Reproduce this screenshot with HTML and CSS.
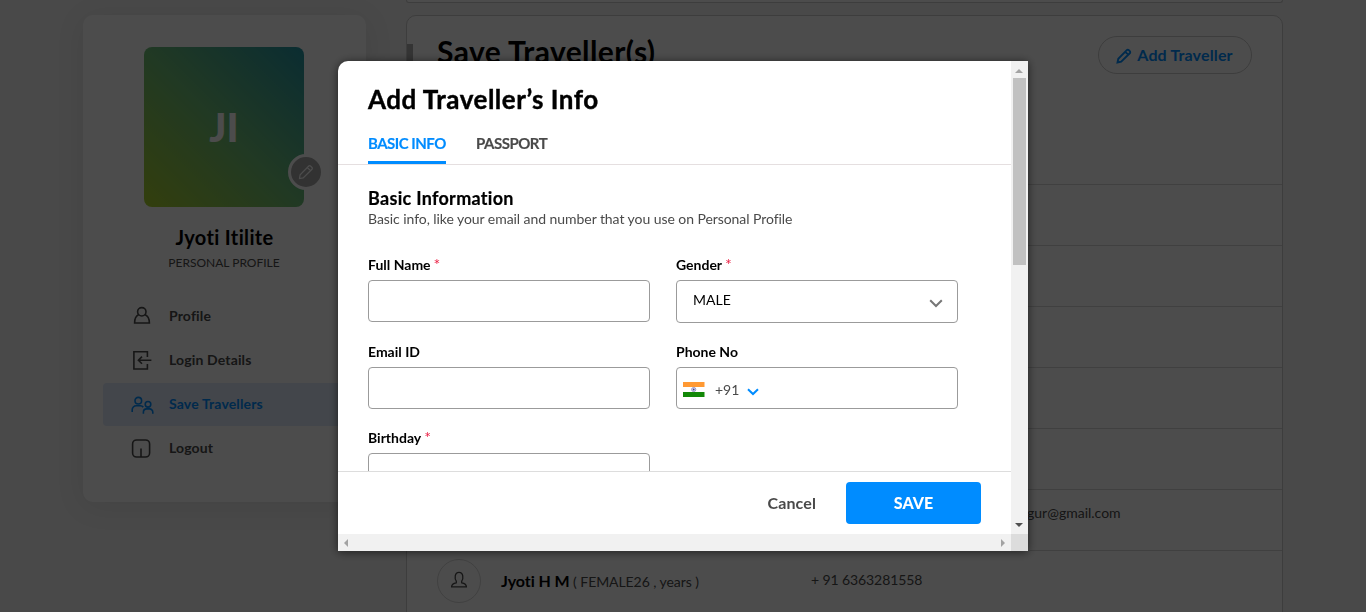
FILE: index.html
```html
<!DOCTYPE html>
<html lang="en">
<head>
<meta charset="utf-8">
<title>Save Travellers</title>
<link rel="stylesheet" href="styles.css">
</head>
<body>
<div class="page">
  <aside class="sidebar">
    <div class="avatar">JI
      <span class="avatar-edit"><svg width="18" height="18" viewBox="0 0 18 18"><path d="M2.500 15.500l.6-3.700L11.800 3a1.200 1.200 0 0 1 1.700 0l1.500 1.500a1.200 1.200 0 0 1 0 1.700L6.200 14.900zM10.300 4.500l3.200 3.200"/></svg></span>
    </div>
    <h2 class="user-name">Jyoti Itilite</h2>
    <p class="user-type">PERSONAL PROFILE</p>
    <nav class="menu">
      <a class="menu-item"><svg width="24" height="24" viewBox="0 0 24 24"><circle cx="11.800" cy="6.800" r="4.200"/><path d="M8.700 9.500C5.500 11 4.600 13.500 4.600 18H19.400C19.400 13.500 18.300 11 14.900 9.500"/></svg>Profile</a>
      <a class="menu-item"><svg width="24" height="24" viewBox="0 0 24 24"><path d="M17.400 8V2.800H3.900v17.200h13.500v-5M21.400 11.200H8.500M12 7.600l-3.600 3.600 3.600 3.600"/></svg>Login Details</a>
      <a class="menu-item active"><svg width="24" height="24" viewBox="0 0 24 24"><circle cx="8.300" cy="7.700" r="3.300"/><path d="M2.200 19v-2.200a4 4 0 0 1 4-4h4.200a3.800 3.800 0 0 1 2.900 1.300"/><circle cx="18" cy="11.300" r="2.800"/><path d="M13.400 20.800v-1.600a3.300 3.300 0 0 1 3.300-3.300h2.800a3.300 3.300 0 0 1 3.300 3.300v1.600"/></svg>Save Travellers</a>
      <a class="menu-item"><svg width="24" height="24" viewBox="0 0 24 24"><rect x="2.600" y="3" width="17" height="17" rx="4"/><path d="M11 11.500V20"/></svg>Logout</a>
    </nav>
  </aside>
  <main class="content">
    <section class="previous-card"></section>
    <section class="card">
      <header class="card-head">
        <h1 class="card-title">Save Traveller(s)</h1>
        <button class="add-button"><svg width="16" height="16" viewBox="0 0 16 16"><path d="M1.500 14.500l.8-3.700L10.800 2.200a1.400 1.400 0 0 1 2 0l1 1a1.400 1.400 0 0 1 0 2L5.200 13.700zM9.300 3.800l2.900 2.900"/></svg>Add Traveller</button>
      </header>
      <div class="row"></div>
      <div class="row"></div>
      <div class="row"></div>
      <div class="row"></div>
      <div class="row"></div>
      <div class="row"><span class="email">gur@gmail.com</span></div>
      <div class="row">
        <span class="person"><svg width="20" height="20" viewBox="0 0 20 20"><path d="M7.300 10.100C5.500 7.800 5.400 1.300 10 1.300s4.500 6.500 2.700 8.800v1.700c3 .5 4.700 1.600 4.700 4H2.600c0-2.400 1.700-3.500 4.700-4z"/></svg></span>
        <span class="person-name"><b>Jyoti H M</b> ( FEMALE26 , years )</span>
        <span class="phone">+ 91 6363281558</span>
      </div>
    </section>
  </main>
</div>

<div class="overlay">
  <div class="modal">
    <div class="modal-main">
      <header class="modal-head">
        <h2 class="modal-title">Add Traveller’s Info</h2>
        <div class="tabs"><span class="tab selected">BASIC INFO</span><span class="tab">PASSPORT</span></div>
      </header>
      <div class="modal-body">
        <h3 class="section-title">Basic Information</h3>
        <p class="section-note">Basic info, like your email and number that you use on Personal Profile</p>
        <div class="form">
          <div class="field"><label>Full Name<i>*</i></label><div class="input"></div></div>
          <div class="field"><label>Gender<i>*</i></label><div class="input select">MALE<svg width="14" height="9" viewBox="0 0 14 9"><path d="M1.200 1.200L7 7l5.800-5.800"/></svg></div></div>
          <div class="field"><label>Email ID</label><div class="input"></div></div>
          <div class="field"><label>Phone No</label><div class="input tel">
            <svg class="flag" width="22" height="15" viewBox="0 0 22 15"><path fill="#ff9933" d="M0 0h21.500v5H0z"/><path fill="#fff" d="M0 5h21.500v5H0z"/><path fill="#128807" d="M0 10h21.500v5H0z"/><circle cx="10.700" cy="7.500" r="2.100" fill="#dcdcf2" stroke="#8585bd" stroke-width=".8"/><circle cx="10.700" cy="7.500" r=".9" fill="#44448f"/></svg>
            <span>+91</span>
            <svg class="tel-arrow" width="12" height="8" viewBox="0 0 12 8"><path d="M1 1.200l5 4.800 5-4.800"/></svg></div></div>
          <div class="field"><label>Birthday<i>*</i></label><div class="input"></div></div>
        </div>
      </div>
      <footer class="modal-foot"><button class="cancel">Cancel</button><button class="save">SAVE</button></footer>
    </div>
    <div class="bar-y"><span class="up"></span><span class="thumb"></span><span class="down"></span></div>
    <div class="bar-x"><span class="left"></span><span class="right"></span></div>
    <div class="bar-corner"></div>
  </div>
</div>
</body>
</html>
```
FILE: styles.css
```css
* { box-sizing: border-box; }
body { margin: 0; height: 612px; overflow: hidden; background: #f3f3f3; font-family: Lato, "Liberation Sans", sans-serif; color: #000; font-variant-ligatures: none; }
h1, h2, h3, p { margin: 0; }
button { font-family: inherit; background: none; border: 0; padding: 0; }
svg { display: block; flex: none; fill: none; stroke: currentColor; stroke-width: 1.6; }

.page { display: flex; gap: 40px; padding-left: 83px; height: 612px; overflow: hidden; }
.sidebar { width: 283px; height: 487px; margin-top: 15px; padding: 32px 20px 0; background: #fff; border-radius: 10px; box-shadow: 0 4px 30px rgba(0,0,0,.08); }
.avatar { position: relative; width: 160px; height: 160px; margin: 0 0 0 41px; border-radius: 8px; background: linear-gradient(45deg, #aad22d 0%, #6ebe78 50%, #2596a5 100%); display: flex; align-items: center; justify-content: center; color: #fff; font-weight: 900; font-size: 40px; }
.avatar-edit { position: absolute; right: -20px; bottom: 17px; width: 36px; height: 36px; border: 3px solid #fff; border-radius: 50%; background: #a8a8a8; display: flex; align-items: center; justify-content: center; }
.avatar-edit svg { stroke-width: 1.2; }
.user-name { margin-top: 17px; font-size: 20px; line-height: 26px; letter-spacing: .35px; text-align: center; }
.user-type { margin-top: 6px; padding-right: 1px; font-size: 12px; line-height: 14px; text-align: center; color: #4a4a4a; }
.menu { margin-top: 25px; }
.menu-item { display: flex; align-items: center; height: 43px; margin-bottom: 1px; padding: 0 0 2px 27px; gap: 15px; border-radius: 4px; font-size: 14px; letter-spacing: .15px; font-weight: 700; color: #4a4a4a; }
.menu-item svg { margin-top: 2px; }
.active { color: #008cff; background: #dfebfa; }

.content { width: 877px; display: flex; flex-direction: column; gap: 12px; }
.previous-card { height: 3px; border: 1px solid #ccc; border-top: 0; border-radius: 0 0 10px 10px; background: #fff; flex: none; }
.card { height: 620px; flex: none; border: 1px solid #ccc; border-radius: 10px; background: #fff; }
.card-head { display: flex; justify-content: space-between; align-items: flex-start; height: 168px; padding: 20px 30px 0; background: linear-gradient(#b0b0b0, #b0b0b0) 0 28px / 6px 32px no-repeat; }
.card-title { margin-top: -1px; font-size: 30px; line-height: 32px; font-weight: 700; letter-spacing: .4px; }
.add-button { display: flex; align-items: center; justify-content: center; gap: 5px; width: 154px; height: 38px; padding: 0 1px 2px 0; border: 1px solid #ccc; border-radius: 19px; color: #008cff; font-size: 16px; letter-spacing: .15px; font-weight: 700; }
.add-button svg { margin-top: 3px; stroke-width: 1.9; }
.row { display: flex; align-items: center; height: 61px; padding-left: 30px; border-top: 1px solid #d8d8d8; font-size: 14px; color: #4a4a4a; }
.email { margin: -16px 0 0 590px; }
.person { display: flex; align-items: center; justify-content: center; width: 44px; height: 44px; border: 1px solid #d8d8d8; border-radius: 50%; }
.person svg { stroke-width: 1.3; }
.person-name { width: 310px; margin: -2px 0 0 20px; letter-spacing: -.07px; }
.person-name b { color: #000; font-size: 16px; }
.phone { margin-top: -4px; letter-spacing: -.1px; }

.overlay { position: fixed; inset: 0; display: flex; align-items: center; justify-content: center; background: rgba(0,0,0,.7); }
.modal { display: grid; grid-template: 473px 17px / 673px 17px; width: 690px; height: 490px; border-radius: 10px 0 0 0; overflow: hidden; background: #fff; box-shadow: 0 1px 10px rgba(0,0,0,.6); }
.modal-main { display: flex; flex-direction: column; min-height: 0; }
.modal-head { height: 104px; flex: none; padding: 22px 30px 0; border-bottom: 1px solid #e5dfe0; }
.modal-title { font-size: 26px; line-height: 32px; font-weight: 700; letter-spacing: .5px; -webkit-text-stroke: .4px #000; }
.tabs { display: flex; gap: 30px; margin-top: 18px; }
.tab { height: 31px; font-size: 15px; line-height: 21px; font-weight: 700; letter-spacing: -.5px; -webkit-text-stroke: .15px currentColor; color: #4a4a4a; }
.selected { width: 78px; white-space: nowrap; color: #008cff; border-bottom: 3px solid #008cff; }
.modal-body { height: 306px; flex: none; overflow: hidden; padding: 22px 30px 0; }
.section-title { font-size: 18px; line-height: 22px; letter-spacing: .3px; -webkit-text-stroke: .2px #000; }
.section-note { font-size: 14px; line-height: 20px; letter-spacing: -.06px; color: #4a4a4a; }
.form { display: grid; grid-template-columns: 282px 282px; gap: 20px 26px; margin-top: 27px; }
.field label { display: block; height: 24px; font-size: 14px; line-height: 18px; font-weight: 700; }
.field i { margin-left: 3px; font-size: 16px; line-height: 1; font-style: normal; font-weight: 400; color: #eb2045; }
.input { display: flex; align-items: center; height: 42px; border: 1px solid #9b9b9b; border-radius: 4px; font-size: 14px; }
.select { height: 43px; padding: 0 14px 4px 16px; justify-content: space-between; }
.select svg { margin-top: 7px; stroke: #777; stroke-width: 2; }
.tel { padding: 3px 0 0 6px; color: #4a4a4a; }
.tel span { margin: 0 8px 0 10px; }
.flag { stroke: none; }
.tel-arrow { margin-top: 5px; stroke: #008cff; stroke-width: 2; }
.modal-foot { display: flex; align-items: center; justify-content: flex-end; height: 63px; flex: none; padding-right: 30px; border-top: 1px solid #ddd; }
.cancel { margin: -2px 30px 0 0; font-size: 16px; letter-spacing: .1px; font-weight: 700; color: #4a4a4a; }
.save { width: 135px; height: 42px; padding-bottom: 1px; border-radius: 4px; background: #008cff; color: #fff; font-size: 16px; font-weight: 900; }
.bar-y { display: flex; flex-direction: column; align-items: center; background: #f1f1f1; }
.bar-y .thumb { width: 13px; height: 187px; margin-top: 5px; background: #c1c1c1; }
.up { margin: 8px 1px 0 0; border: 4px solid transparent; border-top: 0; border-bottom-color: #a3a3a3; }
.down { margin: auto 1px 7px 0; border: 4px solid transparent; border-bottom: 0; border-top-color: #505050; }
.bar-x { display: flex; align-items: center; justify-content: space-between; padding: 0 6px; background: #f1f1f1; }
.left { border: 4px solid transparent; border-left: 0; border-right-color: #a3a3a3; }
.right { border: 4px solid transparent; border-right: 0; border-left-color: #a3a3a3; }
.bar-corner { background: #dcdcdc; }
```
